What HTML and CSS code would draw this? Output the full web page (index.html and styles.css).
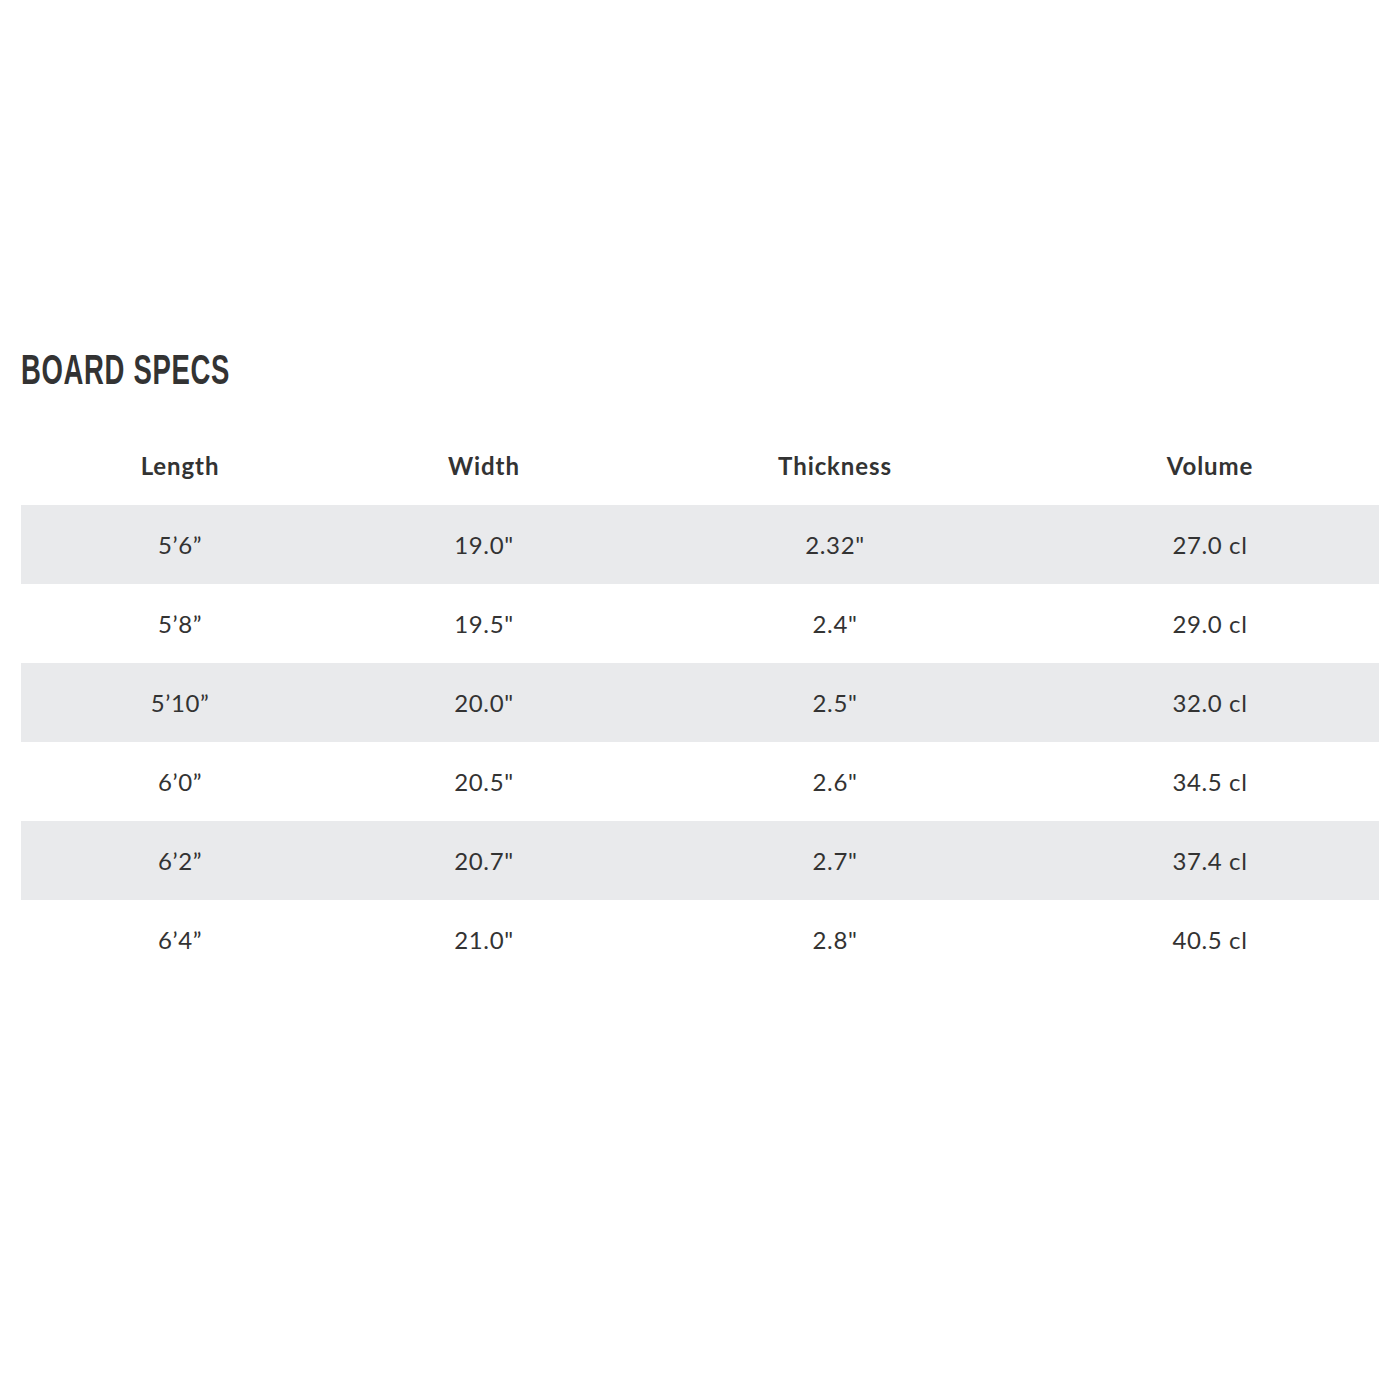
FILE: index.html
```html
<!DOCTYPE html>
<html>
<head>
<meta charset="utf-8">
<link rel="stylesheet" href="styles.css">
</head>
<body>
<section class="specs">
  <h2 class="title"><span>BOARD SPECS</span></h2>
  <div class="table">
    <div class="row head"><div>Length</div><div>Width</div><div>Thickness</div><div>Volume</div></div>
    <div class="row alt"><div>5’6”</div><div>19.0"</div><div>2.32"</div><div>27.0 cl</div></div>
    <div class="row"><div>5’8”</div><div>19.5"</div><div>2.4"</div><div>29.0 cl</div></div>
    <div class="row alt"><div>5’10”</div><div>20.0"</div><div>2.5"</div><div>32.0 cl</div></div>
    <div class="row"><div>6’0”</div><div>20.5"</div><div>2.6"</div><div>34.5 cl</div></div>
    <div class="row alt"><div>6’2”</div><div>20.7"</div><div>2.7"</div><div>37.4 cl</div></div>
    <div class="row"><div>6’4”</div><div>21.0"</div><div>2.8"</div><div>40.5 cl</div></div>
  </div>
</section>
</body>
</html>
```

FILE: styles.css
```css
html, body {
  margin: 0;
  padding: 0;
  background: #fff;
}
body {
  color: #333;
  font-family: "Lato", "Open Sans", sans-serif;
}
.specs {
  padding: 343px 21px 0 21px;
}
.title {
  margin: 0 0 31px 0;
  height: 52px;
  font-family: "Liberation Sans Narrow", "Liberation Sans", sans-serif;
  font-weight: 700;
  font-size: 43px;
  line-height: 52px;
  color: #333;
}
.title span {
  display: inline-block;
  letter-spacing: 1px;
  transform: scaleX(0.64);
  transform-origin: left center;
}
.table {
  display: flex;
  flex-direction: column;
}
.row {
  display: grid;
  grid-template-columns: 318px 290px 412px 338px;
  height: 79px;
  align-items: center;
  text-align: center;
  font-size: 24px;
  letter-spacing: 0.6px;
}
.row.head {
  font-weight: 700;
  letter-spacing: 0.9px;
}
.row.alt {
  background: #e9eaec;
}
```
